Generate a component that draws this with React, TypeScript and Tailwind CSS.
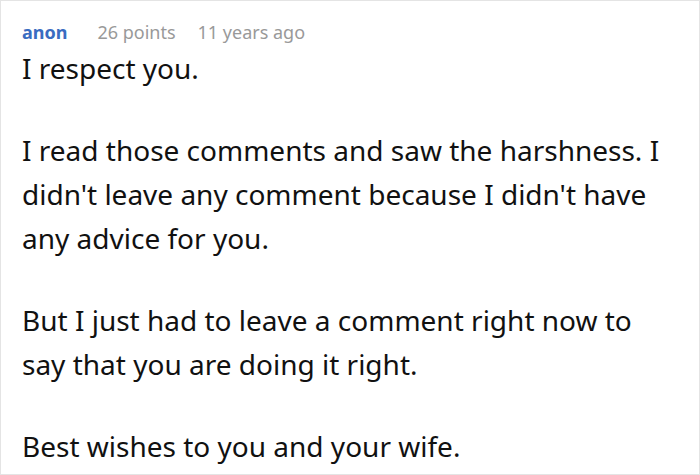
export default function App() {
  return (
    <div className="w-[700px] h-[475px] bg-white border border-[#e4e4e4] px-[21px] pt-[17px] font-['Noto_Sans',sans-serif] overflow-hidden">
      <div className="flex items-baseline text-[18px] leading-[28px]">
        <span className="font-bold text-[#3a6cc1]">anon</span>
        <span className="ml-[30px] text-[#999999]">26 points</span>
        <span className="ml-[22px] text-[#999999]">11 years ago</span>
      </div>
      <div className="text-[28px] leading-[44px] text-[#111111] flex flex-col gap-[38px]">
        <p>I respect you.</p>
        <p>I read those comments and saw the harshness. I didn't leave any comment because I didn't have any advice for you.</p>
        <p>But I just had to leave a comment right now to say that you are doing it right.</p>
        <p>Best wishes to you and your wife.</p>
      </div>
    </div>
  );
}
